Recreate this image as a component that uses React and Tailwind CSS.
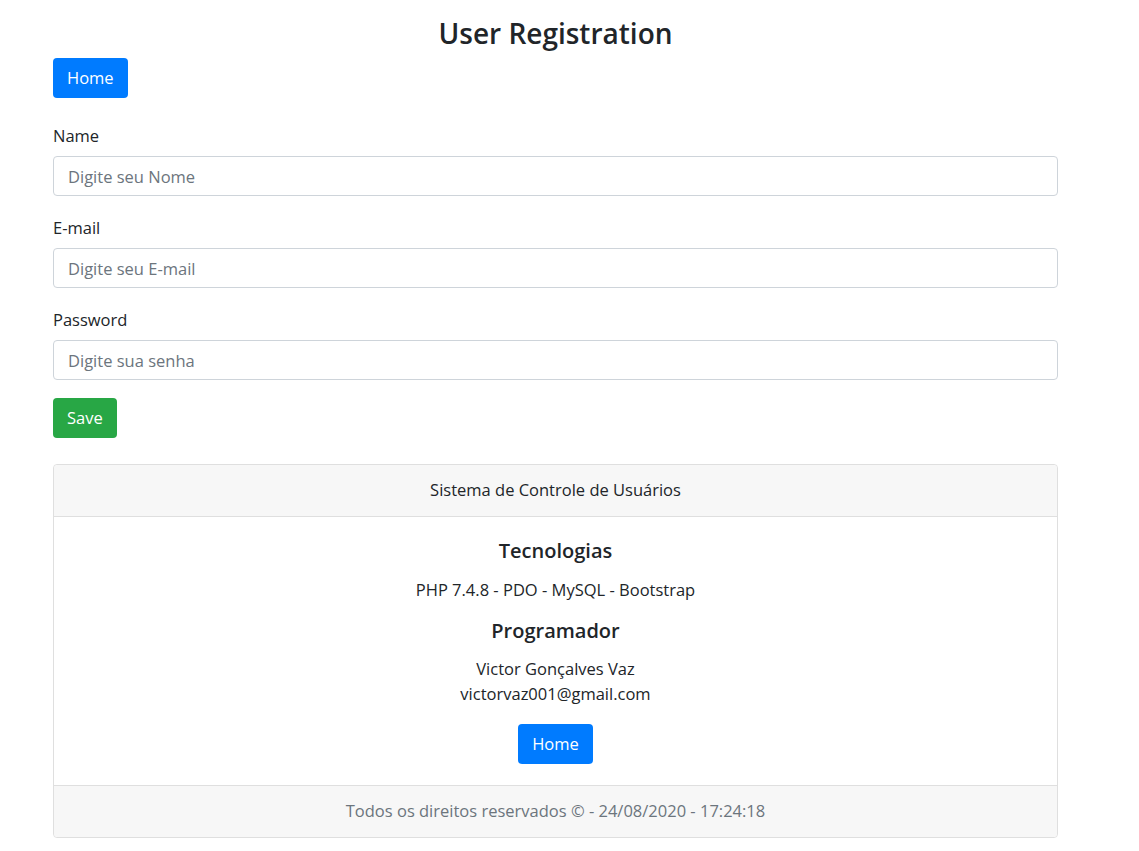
export default function App() {
  const font = { fontFamily: '"Segoe UI", "Open Sans", "Noto Sans", sans-serif' };

  return (
    <div className="min-h-screen bg-white text-[#212529] text-[16.5px]" style={font}>
      <div className="ml-[53px] w-[1005px] pt-[16px] pb-[14px]">
        <h3 className="text-center text-[28px] font-semibold leading-[34px] mb-[8px]">User Registration</h3>

        <button className="h-[40px] px-[14px] rounded bg-[#007bff] text-white leading-6">Home</button>

        <form className="mt-[26px]" onSubmit={(e) => e.preventDefault()}>
          <div className="mb-[20px]">
            <label className="block leading-6 mb-[8px]">Name</label>
            <input
              type="text"
              placeholder="Digite seu Nome"
              className="block w-full h-[40px] px-[14px] border border-[#ced4da] rounded placeholder-[#6c757d] outline-none"
            />
          </div>
          <div className="mb-[20px]">
            <label className="block leading-6 mb-[8px]">E-mail</label>
            <input
              type="email"
              placeholder="Digite seu E-mail"
              className="block w-full h-[40px] px-[14px] border border-[#ced4da] rounded placeholder-[#6c757d] outline-none"
            />
          </div>
          <div className="mb-[18px]">
            <label className="block leading-6 mb-[8px]">Password</label>
            <input
              type="password"
              placeholder="Digite sua senha"
              className="block w-full h-[40px] px-[14px] border border-[#ced4da] rounded placeholder-[#6c757d] outline-none"
            />
          </div>
          <button type="submit" className="h-[40px] px-[14px] rounded bg-[#28a745] text-white leading-6">Save</button>
        </form>

        <div className="mt-[26px] border border-[#dfdfdf] rounded text-center">
          <div className="h-[52px] flex items-center justify-center bg-[#f7f7f7] border-b border-[#dfdfdf] rounded-t">
            Sistema de Controle de Usuários
          </div>
          <div className="pt-[20px] pb-[21px] flex flex-col items-center">
            <h5 className="text-[20px] font-semibold leading-[28px]">Tecnologias</h5>
            <p className="mt-[13px] leading-6">PHP 7.4.8 - PDO - MySQL - Bootstrap</p>
            <h5 className="mt-[15px] text-[20px] font-semibold leading-[28px]">Programador</h5>
            <p className="mt-[11px] leading-[25px]">
              Victor Gonçalves Vaz
              <br />
              victorvaz001@gmail.com
            </p>
            <button className="mt-[18px] h-[40px] px-[14px] rounded bg-[#007bff] text-white leading-6">Home</button>
          </div>
          <div className="h-[52px] flex items-center justify-center bg-[#f7f7f7] border-t border-[#dfdfdf] rounded-b text-[#6c757d]">
            Todos os direitos reservados © - 24/08/2020 - 17:24:18
          </div>
        </div>
      </div>
    </div>
  );
}
